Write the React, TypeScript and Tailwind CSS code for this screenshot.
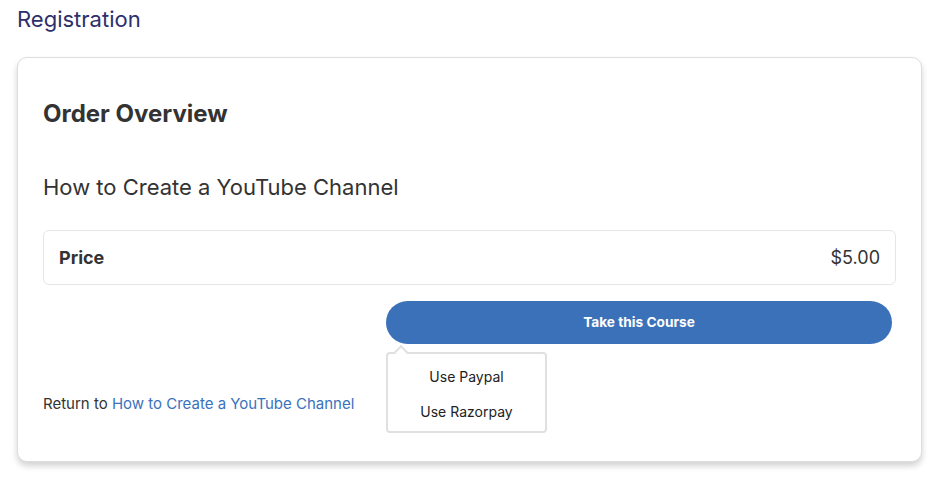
export default function App() {
  return (
    <div className="min-h-[486px] bg-white pl-[17px] pr-[27px] pt-[4px] font-['Inter',sans-serif] text-[#333]">
      <h1 className="text-[22px] leading-[30px] text-[#2d2f6c]">Registration</h1>

      <div className="mt-[23px] rounded-[10px] border border-[#dedede] bg-white px-[25px] pb-[28px] pt-[42px] shadow-[0_4px_6px_rgba(0,0,0,0.18)]">
        <h2 className="text-[24px] font-bold leading-[28px] text-[#333]">Order Overview</h2>

        <p className="mt-[45px] text-[22px] leading-[28px] text-[#333]">How to Create a YouTube Channel</p>

        <div className="mt-[29px] flex h-[55px] items-center justify-between rounded-[6px] border border-[#e6e6ea] px-[15px]">
          <span className="text-[18px] font-bold text-[#333]">Price</span>
          <span className="text-[18px] text-[#333]">$5.00</span>
        </div>

        <div className="mt-[16px] flex items-end justify-between">
          <p className="mb-[19px] text-[15px] leading-[20px] text-[#333]">
            Return to{" "}
            <a href="#" className="text-[#3a72bd]">
              How to Create a YouTube Channel
            </a>
          </p>

          <div className="mr-[4px] w-[506px]">
            <button className="h-[43px] w-full rounded-full bg-[#3b71b9] text-[13.7px] font-bold text-white">
              Take this Course
            </button>

            <div className="relative mt-[8px] w-[161px] rounded-[4px] border-2 border-[#e0e0e0] bg-white pb-[2px] pt-[5px] text-center text-[14px] text-[#222]">
              {/* caret */}
              <div className="absolute left-[8px] top-[-7px] h-[10px] w-[10px] rotate-45 border-l-2 border-t-2 border-[#e0e0e0] bg-white" />
              <div className="flex h-[35px] items-center justify-center">Use Paypal</div>
              <div className="flex h-[35px] items-center justify-center">Use Razorpay</div>
            </div>
          </div>
        </div>
      </div>
    </div>
  );
}
